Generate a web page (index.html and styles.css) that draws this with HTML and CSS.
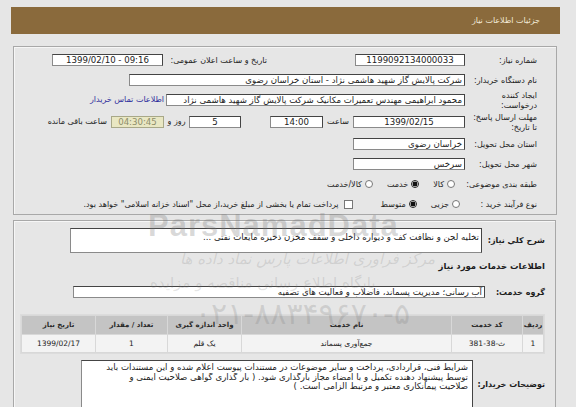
FILE: index.html
```html
<!DOCTYPE html>
<html lang="fa" dir="rtl">
<head>
  <meta charset="UTF-8" />
  <title>جزئیات اطلاعات نیاز</title>
  <link rel="stylesheet" href="styles.css">
</head>
<body>
  <!-- header -->
  <div class="page-head">جزئیات اطلاعات نیاز</div>

  <!-- main info -->
  <div class="panel info">
    <div class="row">
      <div class="lbl">شماره نیاز:</div>
      <div class="box w110 mid">1199092134000033</div>
      <div class="lbl-date">تاریخ و ساعت اعلان عمومی:</div>
      <div class="box w111 mid ltr">1399/02/10 - 09:16</div>
    </div>
    <div class="row">
      <div class="lbl">نام دستگاه خریدار:</div>
      <div class="box w336">شرکت پالایش گاز شهید هاشمی نژاد - استان خراسان رضوی</div>
    </div>
    <div class="row tall">
      <div class="lbl two">ایجاد کننده<br>درخواست:</div>
      <div class="box w299">محمود ابراهیمی مهندس تعمیرات مکانیک شرکت پالایش گاز شهید هاشمی نژاد</div>
      <a class="contact" href="#">اطلاعات تماس خریدار</a>
    </div>
    <div class="row tall">
      <div class="lbl two">مهلت ارسال پاسخ:<br>تا تاریخ:</div>
      <div class="box w112 mid">1399/02/15</div>
      <span class="t-hour">ساعت</span>
      <div class="box w53 mid">14:00</div>
      <div class="box w52 mid days">5</div>
      <span class="t-day">روز و</span>
      <div class="box w53 mid timer">04:30:45</div>
      <span class="t-left">ساعت باقی مانده</span>
    </div>
    <div class="row">
      <div class="lbl">استان محل تحویل:</div>
      <div class="box w112">خراسان رضوی</div>
    </div>
    <div class="row">
      <div class="lbl">شهر محل تحویل:</div>
      <div class="box w112">سرخس</div>
    </div>
    <div class="row">
      <div class="lbl">طبقه بندی موضوعی:</div>
      <div class="choices first">
        <span class="opt"><i class="radio"></i>کالا</span>
        <span class="opt"><i class="radio on"></i>خدمت</span>
        <span class="opt"><i class="radio"></i>کالا/خدمت</span>
      </div>
    </div>
    <div class="row">
      <div class="lbl">نوع فرآیند خرید :</div>
      <div class="choices">
        <span class="opt"><i class="radio"></i>جزیی</span>
        <span class="opt"><i class="radio on"></i>متوسط</span>
        <span class="opt wide"><i class="check"></i>پرداخت تمام یا بخشی از مبلغ خرید،از محل "اسناد خزانه اسلامی" خواهد بود.</span>
      </div>
    </div>
  </div>

  <!-- needs -->
  <div class="panel needs">
    <div class="row-b">
      <div class="lbl-b">شرح کلي نیاز:</div>
      <div class="box area">تخلیه لجن و نظافت کف و دیواره داخلی و سقف مخزن ذخیره مایعات نفتی ...</div>
    </div>
    <div class="title-b">اطلاعات خدمات مورد نیاز</div>
    <div class="row-b group">
      <div class="lbl-b">گروه خدمت:</div>
      <div class="box w412">آب رسانی؛ مدیریت پسماند، فاضلاب و فعالیت های تصفیه</div>
    </div>

    <table class="items">
      <colgroup>
        <col style="width: 20px"><col style="width: 70px"><col style="width: 209px">
        <col style="width: 73px"><col style="width: 71px"><col style="width: 73px">
      </colgroup>
      <thead>
        <tr>
          <th>ردیف</th>
          <th>کد خدمت</th>
          <th>نام خدمت</th>
          <th>واحد اندازه گیری</th>
          <th>تعداد / مقدار</th>
          <th>تاریخ نیاز</th>
        </tr>
      </thead>
      <tbody>
        <tr>
          <td>1</td>
          <td>ث-38-381</td>
          <td>جمع‌آوری پسماند</td>
          <td>یک قلم</td>
          <td>1</td>
          <td>1399/02/17</td>
        </tr>
      </tbody>
    </table>

    <div class="row-b notes">
      <div class="lbl-b">توضیحات خریدار:</div>
      <div class="box note">
        <div class="ln">شرایط فنی، قراردادی، پرداخت و سایر موضوعات در مستندات پیوست اعلام شده و این مستندات باید</div>
        <div class="ln">توسط پیشنهاد دهنده تکمیل و با امضاء مجاز بارگذاری شود. ( بار گذاری گواهی صلاحیت ایمنی و</div>
        <div class="ln">صلاحیت پیمانکاری معتبر و مرتبط الزامی است. )</div>
      </div>
    </div>
  </div>

  <!-- watermark -->
  <div class="wm wm-name">ParsNamadData</div>
  <div class="wm wm-sub">مرکز فراوری اطلاعات پارس نماد داده ها</div>
  <div class="wm wm-sub2">پایگاه اطلاع رسانی مناقصه و مزایده</div>
  <div class="wm wm-tel">۰۲۱-۸۸۳۴۹۶۷۰-۵</div>
</body>
</html>
```

FILE: styles.css
```css
body {
  margin: 0;
  background-color: #e6e6e6;
  font-family: 'DejaVu Sans', sans-serif;
  font-size: 8px;
  color: #222;
  position: relative;
  height: 407px;
  overflow: hidden;
}

.page-head {
  margin: 7px 16px 0 11px;
  height: 27px;
  line-height: 27px;
  padding-right: 20px;
  background-color: #8a6a3c;
  color: #f3ead9;
  font-size: 8px;
}

.panel {
  border: 1px solid #a8a8a8;
  box-shadow: inset 1px 1px #f6f6f6;
  background-color: #e6e6e6;
}

.info {
  margin: 12px 19px 0 13px;
  padding: 7px 19px 4px 0;
  display: flex;
  flex-direction: column;
  gap: 8px;
}

.row {
  display: flex;
  align-items: center;
  height: 12px;
}
.row.tall {
  align-items: flex-start;
  height: 14px;
}

.lbl {
  width: 72px;
  flex: none;
  white-space: nowrap;
}
.lbl.two {
  line-height: 10px;
  margin-top: -3px;
}

.box {
  box-sizing: border-box;
  height: 12px;
  line-height: 10px;
  font-size: 8.6px;
  background-color: #fff;
  border: 1px solid #8a8a8a;
  border-top-color: #444;
  border-right-color: #444;
  padding: 0 2px;
  white-space: nowrap;
  overflow: hidden;
  flex: none;
}
.box.mid { text-align: center; }
.box.ltr { direction: ltr; }

.w52 { width: 52px; }
.w53 { width: 53px; }
.w110 { width: 110px; }
.w111 { width: 111px; }
.w112 { width: 112px; }
.w299 { width: 299px; }
.w336 { width: 336px; }
.w412 { width: 412px; }

.lbl-date {
  width: 104px;
  margin-right: 88px;
  white-space: nowrap;
}

.contact {
  margin-right: 2px;
  color: #2d2d9c;
  text-decoration: none;
  white-space: nowrap;
  line-height: 12px;
}

.t-hour {
  width: 30px;
  text-align: center;
  line-height: 12px;
}
.days { margin-right: 29px; }
.t-day {
  width: 25px;
  text-align: center;
  line-height: 12px;
}
.timer {
  background-color: #e9e7c3;
  color: #8d8d6a;
  border-color: #a8a888;
}
.t-left {
  margin-right: 4px;
  line-height: 12px;
  white-space: nowrap;
}

.choices {
  display: flex;
  align-items: center;
  gap: 14px;
  margin-right: 5px;
}
.choices.first { margin-right: 10px; }
.opt {
  display: flex;
  align-items: center;
  gap: 3px;
  white-space: nowrap;
}
.opt.wide { margin-right: 14px; }

.radio {
  width: 8px;
  height: 8px;
  border-radius: 50%;
  border: 1px solid #777;
  background-color: #fff;
  box-sizing: border-box;
}
.radio.on {
  border: 1px solid #222;
  background: radial-gradient(circle, #111 0 2.2px, #fff 2.7px);
}
.check {
  width: 9px;
  height: 9px;
  box-sizing: border-box;
  border: 1px solid #777;
  background-color: #fff;
  margin-left: 2px;
}

.needs {
  margin: 5px 20px 0 13px;
  padding: 7px 10px 0 8px;
  height: 190px;
}

.row-b {
  display: flex;
  align-items: center;
}

.lbl-b {
  width: 63px;
  flex: none;
  font-weight: bold;
  font-size: 8px;
  white-space: nowrap;
  color: #1c1c1c;
}

.box.area {
  width: 412px;
  height: 25px;
  line-height: 14px;
  padding-top: 1px;
}

.title-b {
  margin-top: 8px;
  font-weight: bold;
  font-size: 8.5px;
  line-height: 10px;
  color: #1c1c1c;
}

.group { margin-top: 15px; }
.group .lbl-b { width: 60px; }
.group .box { height: 12px; }

.items {
  margin: 16px 0 0 0;
  width: 523px;
  table-layout: fixed;
  border-collapse: separate;
  border-spacing: 1px;
  background-color: #d8d8d8;
  border: 1px solid #dcdcdc;
  font-size: 7.5px;
}
.items th {
  height: 18px;
  padding: 0;
  background-color: #c4c4c4;
  font-weight: bold;
  font-size: 7px;
  color: #2a2a2a;
}
.items td {
  height: 17px;
  padding: 0;
  text-align: center;
  background-color: #f3f3f3;
}

.notes {
  margin-top: 6px;
  align-items: flex-start;
}
.notes .lbl-b {
  width: 72px;
  margin-top: 20px;
}
.box.note {
  width: 392px;
  height: 60px;
  padding: 2px 4px 0 0;
  line-height: 9.5px;
  white-space: nowrap;
}
.ln {
  overflow: hidden;
}

.wm {
  position: absolute;
  color: rgba(120, 120, 120, 0.28);
  white-space: nowrap;
  pointer-events: none;
}
.wm-name {
  left: 148px;
  top: 208px;
  font-family: 'Liberation Sans', sans-serif;
  font-weight: bold;
  font-size: 31px;
  letter-spacing: 1px;
}
.wm-sub {
  left: 180px;
  top: 250px;
  font-size: 15px;
  font-style: italic;
  color: rgba(120, 120, 120, 0.2);
}
.wm-sub2 {
  left: 150px;
  top: 274px;
  font-size: 15px;
  color: rgba(120, 120, 120, 0.2);
}
.wm-tel {
  left: 195px;
  top: 296px;
  font-size: 30px;
  color: rgba(120, 120, 120, 0.22);
}
```
